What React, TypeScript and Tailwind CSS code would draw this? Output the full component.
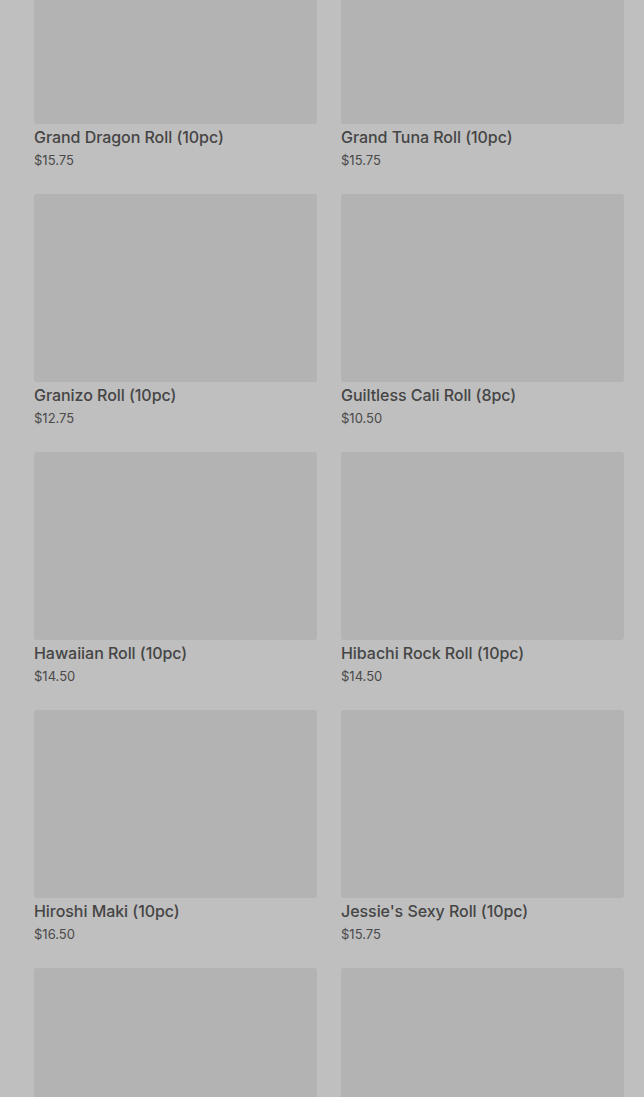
import React from "react";

const items: [string, string][] = [
  ["Grand Dragon Roll (10pc)", "$15.75"],
  ["Grand Tuna Roll (10pc)", "$15.75"],
  ["Granizo Roll (10pc)", "$12.75"],
  ["Guiltless Cali Roll (8pc)", "$10.50"],
  ["Hawaiian Roll (10pc)", "$14.50"],
  ["Hibachi Rock Roll (10pc)", "$14.50"],
  ["Hiroshi Maki (10pc)", "$16.50"],
  ["Jessie's Sexy Roll (10pc)", "$15.75"],
  ["", ""],
  ["", ""],
];

export default function App() {
  return (
    <div className="h-[1097px] overflow-hidden bg-[#bfbfbf]" style={{ fontFamily: "Inter, 'Open Sans', sans-serif" }}>
      <div className="mt-[-64px] grid grid-cols-2 gap-x-6 gap-y-[25px] pl-[34px] pr-[20px]">
        {items.map(([name, price], i) => (
          <div key={i} className="flex flex-col">
            <div className="h-[188px] rounded-[3px] bg-[#b3b3b3]" />
            {name && (
              <>
                <div className="mt-[3px] text-[16px] font-medium leading-[20px] tracking-[-0.05px] text-[#454545]">{name}</div>
                <div className="mt-[4px] text-[13px] leading-[18px] text-[#4a4a4a]">{price}</div>
              </>
            )}
          </div>
        ))}
      </div>
    </div>
  );
}
